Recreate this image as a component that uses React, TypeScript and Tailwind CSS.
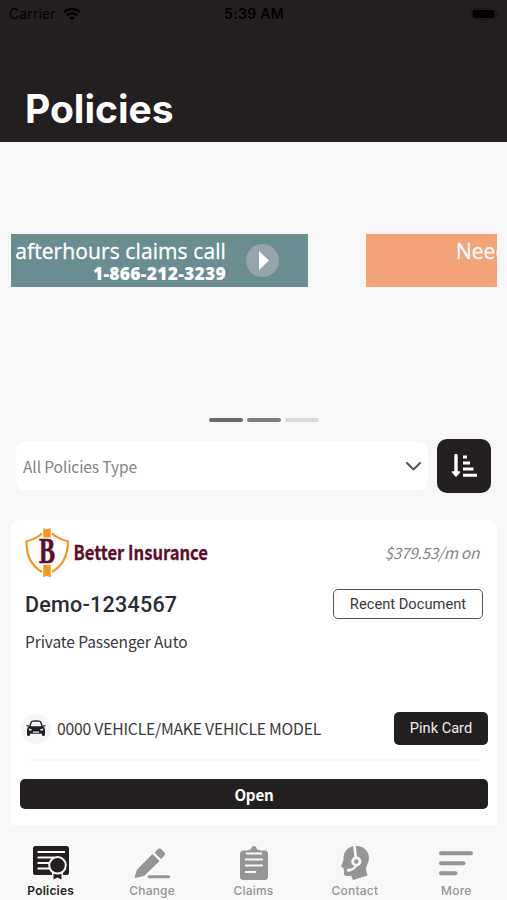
import React from "react";

const sans = "font-['Noto_Sans_CJK_SC',sans-serif]";
const inter = "font-['Inter',sans-serif]";
const roboto = "font-['Roboto',sans-serif]";

function StatusBar() {
    return (
        <div className={`${inter} grid grid-cols-3 items-center h-[27px] pl-[9px] pr-[8px] text-[14px] text-black`}>
            <div className="flex items-center gap-[7px]">
                <span className="tracking-[0.1px]">Carrier</span>
                <svg width="18" height="14" viewBox="0 0 18 14" fill="none" stroke="currentColor" strokeWidth="2.5">
                    <path d="M1 5.200C5.600.8 12.400.8 17 5.200" />
                    <path d="M4 8.300C6.800 5.600 11.200 5.600 14 8.300" />
                    <path d="M6.300 10.600Q9 8.400 11.700 10.600L9 13.300Z" fill="currentColor" stroke="none" />
                </svg>
            </div>
            <span className="text-center font-semibold text-[14px] tracking-[0.3px] whitespace-nowrap">5:39 AM</span>
            <svg className="justify-self-end" width="29" height="14" viewBox="0 0 29 14">
                <rect x="1" y="1.500" width="25" height="11" rx="3" fill="none" stroke="#1a1718" />
                <rect x="2.500" y="3" width="22" height="8" rx="1.500" fill="#000" />
                <path d="M27 5.200q2 1.800 0 3.600z" fill="#111" />
            </svg>
        </div>
    );
}

function Banners() {
    return (
        <div className="mt-[92px] mx-[11px] mr-[10px] h-[53px] flex gap-[58px] overflow-hidden font-['Open_Sans','Noto_Sans',sans-serif] text-white">
            <div className="w-[297px] shrink-0 bg-[#6a8d91] flex items-center pl-[3px]">
                <div className="w-[212px] pt-px text-right whitespace-nowrap">
                    <div className="text-[21px] leading-[24px] font-medium tracking-[0.1px] [-webkit-text-stroke:0.3px_white]">afterhours claims call</div>
                    <div className="text-[17.5px] leading-[21px] font-extrabold tracking-[0.25px]">1-866-212-3239</div>
                </div>
                <div className="ml-5 size-[33px] rounded-full bg-[#96a4ab] flex items-center justify-center">
                    <svg width="10" height="19" viewBox="0 0 10 19" className="ml-[3px]" fill="#fff">
                        <path d="M0 0L10 9.500L0 19Z" />
                    </svg>
                </div>
            </div>
            <div className="w-[297px] shrink-0 bg-[#f4a278] pl-[90px] pt-[5px]">
                <div className="text-[21px] leading-[24px] font-medium whitespace-nowrap [-webkit-text-stroke:0.3px_white]">Need</div>
            </div>
        </div>
    );
}

function Logo() {
    return (
        <svg width="186" height="52" viewBox="24 526 186 52">
            <g fill="none" stroke="#f7981d" strokeWidth="2.2">
                <path d="M42 533.500Q36 539 26.600 541.200C26 556 32 566 42 572" />
                <path d="M52 533.500Q58 539 67.900 541.200C68 556 62 566 52 572" />
            </g>
            <path d="M43.300 528l3.700 1.300 3.700-1.300v9.600h-7.400zM43.300 565h7.400v12.300l-3.700-1.300-3.700 1.300z" fill="#f7981d" />
            <text x="39" y="562.800" textLength="16" lengthAdjust="spacingAndGlyphs" className="font-['Liberation_Serif',serif] text-[35px] font-bold" fill="#5c0f2b" stroke="#5c0f2b" strokeWidth="0.7">B</text>
            <text x="73.500" y="560" textLength="134.500" lengthAdjust="spacingAndGlyphs" className="font-['Noto_Sans_CJK_SC',sans-serif] text-[20px] font-bold" fill="#5c0f2b" stroke="#5c0f2b" strokeWidth="0.3">Better Insurance</text>
        </svg>
    );
}

function CarIcon() {
    return (
        <svg width="20" height="17" viewBox="0 0 20 17" fill="#231f20">
            <path d="M3.600 7L5 2.700Q5.400 1.300 7 1.200Q10 .8 13 1.200Q14.600 1.300 15 2.700L16.400 7" fill="none" stroke="#231f20" strokeWidth="1.300" />
            <path d="M3 6.300H17Q19 7.500 19 9.500V14.800Q19 16 17.500 16T16 14.800V13.800H4V14.800Q4 16 2.500 16T1 14.800V9.500Q1 7.500 3 6.300Z" />
            <path d="M.3 5.200H3V6.600H1Q.3 6.200.3 5.200ZM19.700 5.200H17V6.600H19Q19.700 6.200 19.700 5.200Z" />
            <path d="M2.600 8.500L6 9.600Q5.500 11 4 10.800Q2.500 10.600 2.600 8.500ZM17.400 8.500L14 9.600Q14.500 11 16 10.800Q17.500 10.600 17.400 8.500ZM7 11.500H13V12.800H7Z" fill="#eef0f5" />
        </svg>
    );
}

function PolicyCard() {
    return (
        <div className={`${sans} mt-[27px] ml-[11px] mr-[10px] h-[305px] rounded-t-lg bg-white text-[#3a3839]`}>
            <div className="flex items-center justify-between pt-[6px] pl-[13px] pr-[18px]">
                <Logo />
                <span className="italic pt-[2px] text-[15.5px] tracking-[-0.35px] text-[#858384]">$379.53/m on</span>
            </div>
            <div className="mt-[11px] pl-[14px] pr-[14px] flex items-start justify-between">
                <span className={`${roboto} text-[21.5px] leading-[31px] font-medium tracking-[0.25px] text-[#2b2d31]`}>Demo-1234567</span>
                <button className={`${roboto} w-[150px] h-[30px] rounded-[5px] border-[1.5px] border-[#555354] text-[14.7px] text-[#3a3839]`}>
                    Recent Document
                </button>
            </div>
            <div className="mt-[9px] pl-[14px] text-[15.5px] leading-6 tracking-[-0.1px]">Private Passenger Auto</div>
            <div className="mt-[59px] pl-[10px] pr-[9px] h-[33px] flex items-center">
                <span className="size-[30px] rounded-full bg-[#f4f5f8] flex items-center justify-center">
                    <CarIcon />
                </span>
                <span className="ml-[6px] text-[15.7px] leading-6 tracking-[-0.2px] whitespace-nowrap">0000 VEHICLE/MAKE VEHICLE MODEL</span>
                <button className={`${roboto} ml-auto w-[94px] h-[33px] rounded-[5px] bg-[#231f20] text-[14.6px] text-[#eeeeee]`}>
                    Pink Card
                </button>
            </div>
            <hr className="mt-[14px] mx-[18px] border-t-2 border-[#f7f7f7]" />
            <button className="mt-[18px] ml-[9px] w-[468px] h-[30px] rounded-[5px] bg-[#231f20] text-white text-[15.2px] tracking-[-0.2px] font-bold flex items-center justify-center">
                Open
            </button>
        </div>
    );
}

const tabs = [
    {
        name: "Policies",
        icon: (
            <>
                <rect x="1" y="2" width="36" height="29" rx="2.5" fill="currentColor" />
                <path d="M5.500 8H33M5.500 13.500H22M5.500 19H17M5.500 24.500H17" stroke="#f7f7f7" strokeWidth="2.200" />
                <path d="M20 26H31V33H20Z" fill="#f7f7f7" />
                <path d="M21.500 28H29.500V35.500L25.500 33.500L21.500 35.500Z" fill="currentColor" />
                <circle cx="25.500" cy="21.300" r="8.300" fill="currentColor" stroke="#f7f7f7" strokeWidth="2" />
            </>
        ),
    },
    {
        name: "Change",
        icon: (
            <>
                <path d="M2 33.500L4.500 25.500L19.500 10.500L26 17L11 31.500Z" fill="currentColor" stroke="currentColor" strokeLinejoin="round" />
                <path d="M21.500 8.500L24.500 5.500Q26.500 3.500 28.600 5.500L31 8Q33 10 31 12L28 15Z" fill="currentColor" />
                <path d="M16 32.700H35.500" stroke="currentColor" strokeWidth="3" strokeLinecap="round" />
            </>
        ),
    },
    {
        name: "Claims",
        icon: (
            <>
                <path d="M8.500 6.500H12.500Q14 5.500 16 5.500Q16.500 2 19 2T22 5.500Q24 5.500 25.500 6.500H29.500Q33 6.500 33 10V32.500Q33 36 29.500 36H8.500Q5 36 5 32.500V10Q5 6.500 8.500 6.500Z" fill="currentColor" />
                <path d="M11 9.500H27M10 15.500H28M10 21.500H28M10 28H21" stroke="#f7f7f7" strokeWidth="2" />
            </>
        ),
    },
    {
        name: "Contact",
        icon: (
            <>
                <path d="M18.500 2C27 1 33 6.500 33 14C33 18 30.500 21 29.800 25L31.500 31.500L17 36L15 31.500Q12 32.500 9 31.500Q7.500 31 8 27L7.500 24L5 22.500L7.500 16C7 8 11.500 3 18.500 2Z" fill="currentColor" />
                <path d="M18.500 1.500L20 17" stroke="#f7f7f7" strokeWidth="2.600" />
                <path d="M21 18Q20.500 25 13 26.200" fill="none" stroke="#f7f7f7" strokeWidth="2.200" />
                <ellipse cx="13" cy="26.200" rx="2.300" ry="1.600" fill="#f7f7f7" />
                <circle cx="20.300" cy="17.500" r="3.700" fill="currentColor" stroke="#f7f7f7" strokeWidth="2.800" />
            </>
        ),
    },
    {
        name: "More",
        icon: (
            <path d="M4 9.300H34M4 19.300H26.500M4 29.300H18.500" stroke="currentColor" strokeWidth="4" strokeLinecap="round" />
        ),
    },
];

function TabBar() {
    return (
        <nav className={`${inter} h-[75px] pt-[19px] flex`}>
            {tabs.map((tab, i) => (
                <div
                    key={tab.name}
                    className={`flex-1 flex flex-col items-center ${i === 0 ? "text-[#231f20]" : "text-[#959595]"}`}
                >
                    <svg width="38" height="38" viewBox="0 0 38 38" fill="none">{tab.icon}</svg>
                    <span className={`mt-px text-[12px] leading-4 tracking-[0.2px] ${i === 0 ? "font-semibold" : "font-medium"}`}>{tab.name}</span>
                </div>
            ))}
        </nav>
    );
}

function App(): React.JSX.Element {
    return (
        <div className="w-[507px] h-[900px] bg-[#f7f7f7] overflow-hidden">
            <header className="h-[142px] bg-[#231f20]">
                <StatusBar />
                <h1 className={`${inter} mt-[57px] ml-[25px] text-[39px] leading-[50px] font-bold text-white`}>Policies</h1>
            </header>

            <Banners />

            <div className="mt-[131px] flex justify-center gap-1 pl-[21px]">
                <span className="w-[34px] h-1 rounded-full bg-[#6b696a]" />
                <span className="w-[34px] h-1 rounded-full bg-[#7d7b7c]" />
                <span className="w-[34px] h-1 rounded-full bg-[#d7d6df]" />
            </div>

            <div className="mt-[17px] pl-[16px] pr-[16px] flex items-center gap-[9px]">
                <div className={`${sans} w-[412px] h-[48px] rounded-lg bg-white px-[7px] flex items-center justify-between text-[15.5px] tracking-[-0.1px] text-[#858384]`}>
                    <span className="pt-px">All Policies Type</span>
                    <svg width="15" height="9" viewBox="0 0 15 9" fill="none" stroke="#555" strokeWidth="2" strokeLinecap="round" strokeLinejoin="round">
                        <path d="M1 1L7.500 7.500L14 1" />
                    </svg>
                </div>
                <button className="size-[54px] rounded-[10px] bg-[#231f20] flex items-center justify-center">
                    <svg width="26" height="24" viewBox="0 0 26 24" fill="none" stroke="#fff" strokeWidth="3">
                        <path d="M5 1.500V18" strokeWidth="3.400" strokeLinecap="round" />
                        <path d="M1.500 18H8.500L5 22Z" fill="#fff" strokeWidth="1.500" strokeLinejoin="round" />
                        <path d="M12 3H16M12 9H19M12 15H22.500M12 21.200H26" />
                    </svg>
                </button>
            </div>

            <PolicyCard />
            <TabBar />
        </div>
    );
}

export default App;
